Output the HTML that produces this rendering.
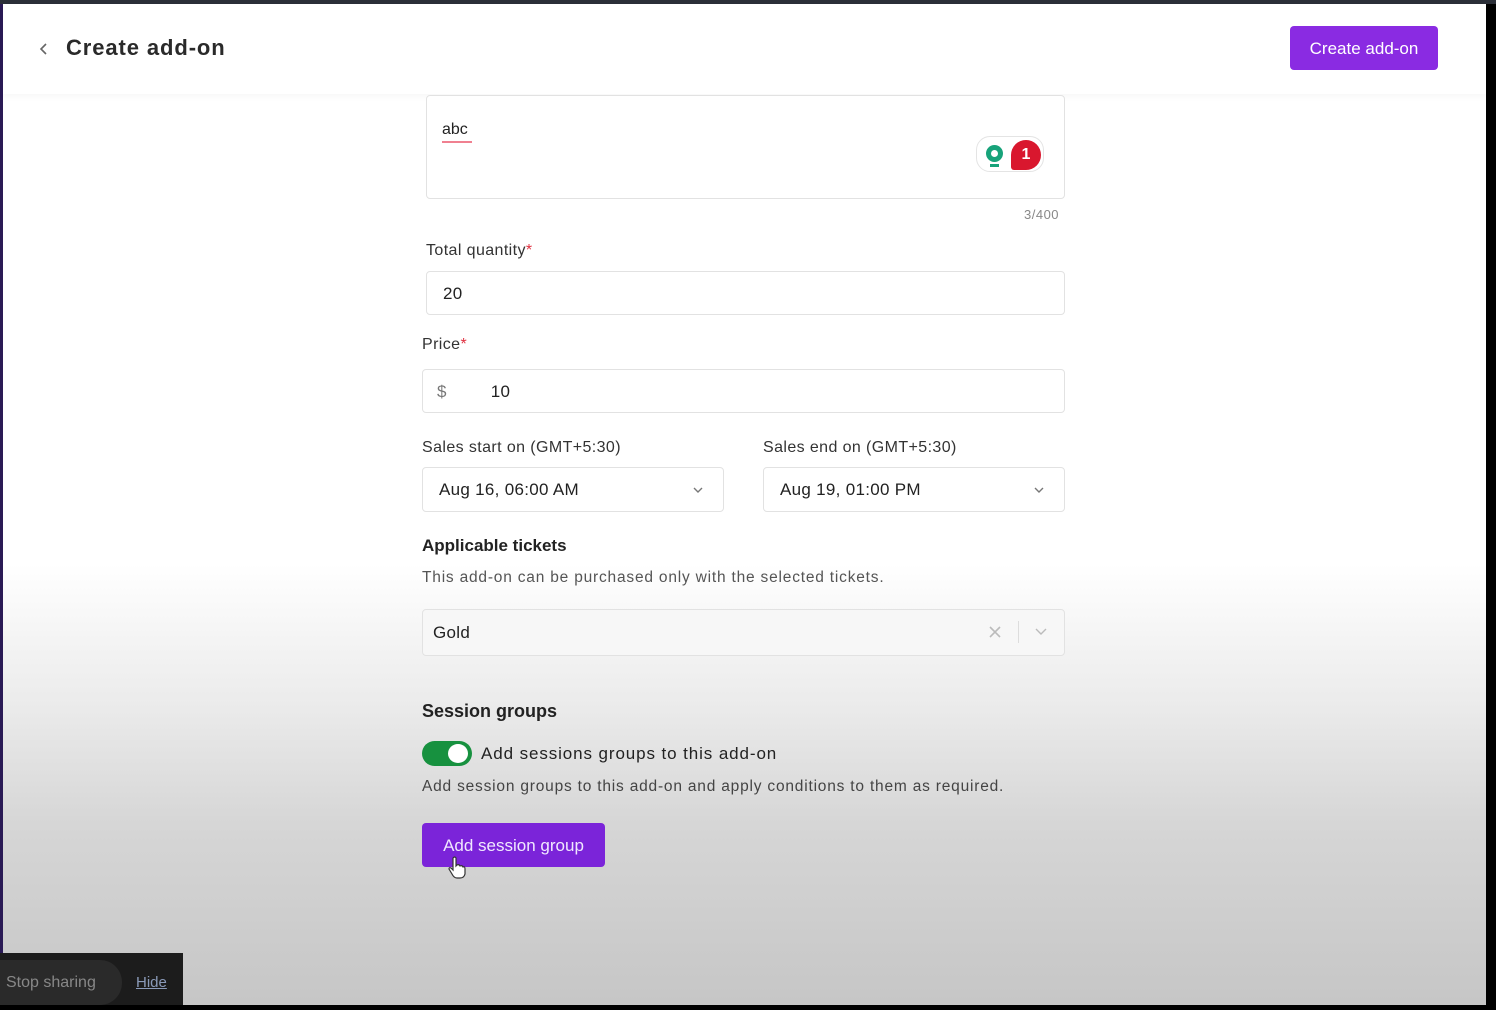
<!DOCTYPE html>
<html><head><style>
*{box-sizing:border-box;margin:0;padding:0}
body{width:1496px;height:1010px;overflow:hidden;font-family:"Liberation Sans",sans-serif;color:#222;position:relative;background:#000}
.page{position:absolute;left:3px;top:4px;width:1483px;height:1001px;background:linear-gradient(to bottom,#fff 0px,#fff 560px,#ebebeb 700px,#d6d6d6 820px,#c6c6c6 1001px)}
.topbar{position:absolute;left:0;top:0;width:1496px;height:4px;background:#2b2f38}
.leftbar{position:absolute;left:0;top:4px;width:3px;height:1001px;background:#2a1a55}
.abs{position:absolute;white-space:nowrap}
.field{position:absolute;border:1px solid #e2e2e2;border-radius:4px;background:#fff;font-size:17px;color:#222;letter-spacing:0.3px}
.lbl{position:absolute;font-size:16px;color:#333;letter-spacing:0.4px}
.req{color:#e03040}
</style></head><body>
<div class="topbar"></div><div class="leftbar"></div>
<div class="page">
  <div class="abs" style="left:0;top:0;width:1483px;height:90px;background:#fff;box-shadow:0 3px 6px rgba(0,0,0,0.03)"></div>
  <svg class="abs" style="left:35px;top:37px" width="12" height="16"><path d="M8 3 L3 8 L8 13" fill="none" stroke="#666" stroke-width="1.6"/></svg>
  <div class="abs" style="left:63px;top:31px;font-size:22px;font-weight:bold;color:#2a2a2a;letter-spacing:0.9px">Create add-on</div>
  <div class="abs" style="left:1287px;top:22px;width:148px;height:44px;background:#8a2be2;border-radius:4px;color:#fff;font-size:17px;line-height:46px;text-align:center">Create add-on</div>

  <div class="field" style="left:423px;top:91px;width:639px;height:104px"></div>
  <div class="abs" style="left:439px;top:117px;font-size:16px;color:#222">abc</div>
  <div class="abs" style="left:439px;top:137px;width:30px;height:2px;background:#f08090"></div>
  <div class="abs" style="left:973px;top:132px;width:68px;height:36px;border:1px solid #e4e4e4;border-radius:14px;background:#fff"></div>
  <div class="abs" style="left:983px;top:141px;width:17px;height:17px;border-radius:50%;background:#17a37a"></div>
  <div class="abs" style="left:988px;top:146px;width:7px;height:7px;border-radius:50%;background:#fff"></div>
  <div class="abs" style="left:987px;top:160px;width:9px;height:3px;background:#17a37a"></div>
  <div class="abs" style="left:1008px;top:136px;width:30px;height:30px;border-radius:15px 15px 15px 3px;background:#d9172e;color:#fff;font-weight:bold;font-size:16px;text-align:center;line-height:30px">1</div>
  <div class="abs" style="left:1021px;top:203px;font-size:13px;color:#888;letter-spacing:0.5px">3/400</div>

  <div class="lbl" style="left:423px;top:238px">Total quantity<span class="req">*</span></div>
  <div class="field" style="left:423px;top:267px;width:639px;height:44px;padding:12px 16px">20</div>

  <div class="lbl" style="left:419px;top:332px">Price<span class="req">*</span></div>
  <div class="field" style="left:419px;top:365px;width:643px;height:44px;padding:12px 14px"><span style="color:#777">$</span><span style="margin-left:44px">10</span></div>

  <div class="lbl" style="left:419px;top:435px">Sales start on (GMT+5:30)</div>
  <div class="field" style="left:419px;top:463px;width:302px;height:45px;padding:12px 16px">Aug 16, 06:00 AM</div>
  <svg class="abs" style="left:689px;top:481px" width="12" height="10"><path d="M2 3 L6 7 L10 3" fill="none" stroke="#777" stroke-width="1.4"/></svg>
  <div class="lbl" style="left:760px;top:435px">Sales end on (GMT+5:30)</div>
  <div class="field" style="left:760px;top:463px;width:302px;height:45px;padding:12px 16px">Aug 19, 01:00 PM</div>
  <svg class="abs" style="left:1030px;top:481px" width="12" height="10"><path d="M2 3 L6 7 L10 3" fill="none" stroke="#777" stroke-width="1.4"/></svg>

  <div class="abs" style="left:419px;top:532px;font-size:17px;font-weight:bold;color:#222">Applicable tickets</div>
  <div class="abs" style="left:419px;top:565px;font-size:15.5px;color:#555;letter-spacing:0.8px">This add-on can be purchased only with the selected tickets.</div>
  <div class="field" style="left:419px;top:605px;width:643px;height:47px;padding:13px 10px;background:#f7f7f7">Gold</div>
  <svg class="abs" style="left:986px;top:622px" width="12" height="12"><path d="M1 1 L11 11 M11 1 L1 11" stroke="#bbb" stroke-width="1.6"/></svg>
  <div class="abs" style="left:1015px;top:617px;width:1px;height:22px;background:#ddd"></div>
  <svg class="abs" style="left:1031px;top:623px" width="14" height="10"><path d="M2 2 L7 7 L12 2" fill="none" stroke="#bbb" stroke-width="1.4"/></svg>

  <div class="abs" style="left:419px;top:697px;font-size:18px;font-weight:bold;color:#222">Session groups</div>
  <div class="abs" style="left:419px;top:737px;width:50px;height:25px;border-radius:13px;background:#17913f"></div>
  <div class="abs" style="left:445px;top:740px;width:20px;height:19px;border-radius:50%;background:#fff"></div>
  <div class="abs" style="left:478px;top:740px;font-size:17px;color:#222;letter-spacing:0.9px">Add sessions groups to this add-on</div>
  <div class="abs" style="left:419px;top:774px;font-size:15.5px;color:#444;letter-spacing:0.8px">Add session groups to this add-on and apply conditions to them as required.</div>
  <div class="abs" style="left:419px;top:819px;width:183px;height:44px;background:#7b24d9;border-radius:4px;color:#f0e8ff;font-size:17px;line-height:46px;text-align:center">Add session group</div>
  <svg class="abs" style="left:444px;top:852px" width="20" height="24"><path d="M6 2 Q8 0 9 2 L9 10 L10 9 Q12 8 13 10 Q15 9 16 11 Q18 10 18 13 L18 18 Q17 22 13 22 L10 22 Q7 22 5 18 L2 13 Q2 11 4 12 L6 14 Z" fill="#fff" stroke="#333" stroke-width="1.2"/></svg>

  <div class="abs" style="left:-3px;top:949px;width:183px;height:52px;background:#1c1c1c"></div>
  <div class="abs" style="left:-3px;top:956px;width:122px;height:45px;border-radius:0 22px 22px 0;background:#2a2a2a"></div>
  <div class="abs" style="left:3px;top:970px;font-size:16px;color:#888">Stop sharing</div>
  <div class="abs" style="left:133px;top:970px;font-size:15px;color:#8a9ab8;text-decoration:underline">Hide</div>
</div>
</body></html>
